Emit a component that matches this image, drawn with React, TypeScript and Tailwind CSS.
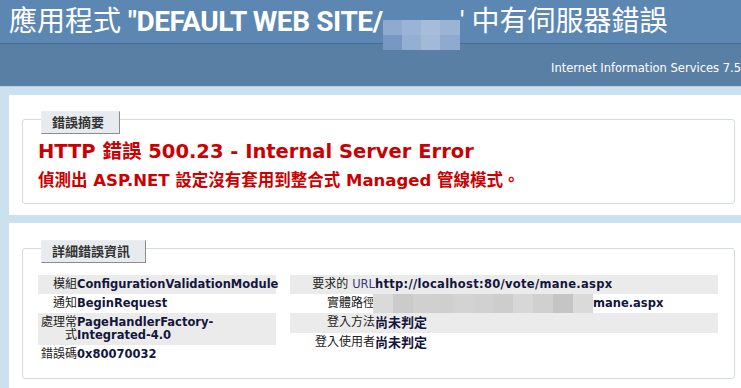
import React from 'react';

const titleBlur = [
  ['#8eaacf', '#9bb4d5', '#a7bcd9', '#9cb4d3'],
  ['#7898c2', '#93afd2', '#a2b9d7', '#8eabcf'],
];

const pathBlur = ['#dadada', '#cbcbcb', '#d0d0d0', '#cfcfcf', '#d3d3d3', '#d1d1d1', '#cdcdcd', '#d7d7d7', '#d0d0d0', '#c5c5c5', '#dadada'];

const Legend = ({ children, width }: { children: React.ReactNode; width: string }) => (
  <div
    className={`-mt-[9px] ml-[3px] ${width} h-[23px] pl-[10px] pr-[15px] py-[4px] bg-[#e7ebef] border-t border-l border-t-[#ededed] border-l-[#ededed] border-r border-b border-r-[#8c8c8c] border-b-[#8c8c8c] text-[13px] leading-[13px] font-bold text-[#333333] whitespace-nowrap`}
  >
    {children}
  </div>
);

interface Row {
  label: React.ReactNode;
  value: React.ReactNode;
}

const DetailTable = ({ rows, labelWidth, className = '' }: { rows: Row[]; labelWidth: string; className?: string }) => (
  <div className={className}>
    {rows.map((row, i) => (
      <div key={i} className={`flex py-[3px] ${i % 2 === 0 ? 'bg-[#ebebeb]' : ''}`}>
        <div className={`${labelWidth} shrink-0 text-right text-[12px] leading-[13px] text-[#222222]`}>{row.label}</div>
        <div className="flex-1 min-w-0 text-[11.5px] leading-[13px] font-bold text-[#15153d]">{row.value}</div>
      </div>
    ))}
  </div>
);

export default function App() {
  const leftRows: Row[] = [
    { label: '模組', value: 'ConfigurationValidationModule' },
    { label: '通知', value: 'BeginRequest' },
    { label: '處理常式', value: 'PageHandlerFactory-Integrated-4.0' },
    { label: '錯誤碼', value: '0x80070032' },
  ];

  const rightRows: Row[] = [
    {
      label: (
        <>
          要求的 <span className="text-[#3b3b7a] text-[11.5px]">URL</span>
        </>
      ),
      value: <span className="tracking-[0.3px]">http://localhost:80/vote/mane.aspx</span>,
    },
    {
      label: '實體路徑',
      value: (
        <span className="flex items-stretch -my-[3px]">
          <span className="flex h-[19px] -ml-[2px]">
            {pathBlur.map((c, i) => (
              <span key={i} className="w-[20px] h-full" style={{ backgroundColor: c }} />
            ))}
          </span>
          <span className="pt-[3px]">mane.aspx</span>
        </span>
      ),
    },
    { label: '登入方法', value: <span className="text-[13px]">尚未判定</span> },
    { label: '登入使用者', value: <span className="text-[13px]">尚未判定</span> },
  ];

  return (
    <div className="min-h-screen overflow-hidden bg-[#CBE1EF] font-['DejaVu_Sans','Noto_Sans_CJK_TC',sans-serif]">
      {/* header */}
      <div className="h-[43px] bg-[#5C87B2] pl-[9px] pt-[6px] whitespace-nowrap text-white text-[28px] leading-[31px] font-['Roboto','Noto_Sans_CJK_TC',sans-serif]">
        <span className="font-normal">應用程式 </span>
        <span className="font-bold tracking-[-0.4px]">"DEFAULT WEB SITE/</span>
        <span className="inline-flex flex-col align-[-4px] w-[77px] h-[30px]">
          {titleBlur.map((r, ri) => (
            <span key={ri} className="flex flex-1">
              {r.map((c, ci) => (
                <span key={ci} className="flex-1" style={{ backgroundColor: c }} />
              ))}
            </span>
          ))}
        </span>
        <span className="font-normal">' 中有伺服器錯誤</span>
      </div>
      <div className="h-[44px] bg-[#5A7FA5] border-t border-t-[#4A6C8E] border-b border-b-[#C1CFDD] pt-[18px] text-right text-white text-[11.5px] leading-[13px] whitespace-nowrap">
        Internet Information Services 7.5
      </div>

      <div className="ml-[9px] pt-[8px]">
        {/* summary */}
        <div className="bg-white pt-[24px] pl-[13px] pr-[6px] pb-[11px]">
          <div className="border border-[#d3dbe3] rounded-[3px] px-[15px] pb-[12px]">
            <Legend width="w-[79px]">錯誤摘要</Legend>
            <div className="mt-[7px] text-[19.5px] leading-[22px] font-bold text-[#CC0000] whitespace-nowrap">
              HTTP 錯誤 500.23 - Internal Server Error
            </div>
            <div className="mt-[8px] text-[16.5px] leading-[20px] font-bold text-[#CC0000] whitespace-nowrap">
              偵測出 ASP.NET 設定沒有套用到整合式 Managed 管線模式。
            </div>
          </div>
        </div>

        {/* details */}
        <div className="mt-[8px] bg-white pt-[25px] pl-[13px] pr-[6px] pb-[12px]">
          <div className="border border-[#d3dbe3] rounded-[3px] px-[15px] pb-[14px]">
            <Legend width="w-[105px]">詳細錯誤資訊</Legend>
            <div className="mt-[12px] flex items-start">
              <DetailTable rows={leftRows} labelWidth="w-[39px]" className="w-[238px]" />
              <DetailTable rows={rightRows} labelWidth="w-[85px]" className="ml-[14px] w-[428px]" />
            </div>
          </div>
        </div>
      </div>
    </div>
  );
}
